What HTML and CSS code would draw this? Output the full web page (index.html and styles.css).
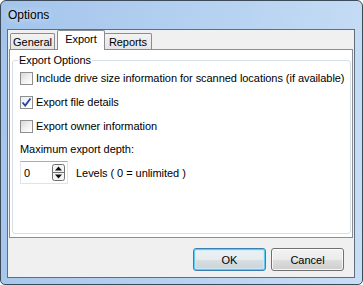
FILE: index.html
```html
<!DOCTYPE html>
<html lang="en">
<head>
    <meta charset="UTF-8">
    <title>Options</title>
    <link rel="stylesheet" href="styles.css">
</head>
<body>
    <!-- Dialog Window -->
    <div class="window">
        <div class="titlebar">Options</div>

        <div class="client">
            <!-- Tab Strip -->
            <div class="tabs">
                <div class="tab general">General</div>
                <div class="tab active">Export</div>
                <div class="tab reports">Reports</div>
            </div>

            <!-- Tab Page -->
            <div class="panel">
                <fieldset class="group">
                    <legend>Export Options</legend>

                    <div class="check">
                        <span class="box"></span>
                        <span>Include drive size information for scanned locations (if available)</span>
                    </div>
                    <div class="check">
                        <span class="box checked">
                            <svg width="11" height="11" viewBox="0 0 11 11">
                                <path d="M1.5 5.5 L4.2 8.5 L9.5 1.5" fill="none" stroke="#2a3f9a" stroke-width="1.8"/>
                            </svg>
                        </span>
                        <span>Export file details</span>
                    </div>
                    <div class="check">
                        <span class="box"></span>
                        <span>Export owner information</span>
                    </div>

                    <div class="depth-label">Maximum export depth:</div>
                    <div class="depth-row">
                        <div class="spin">
                            <span class="spin-value">0</span>
                            <svg class="spin-btn" width="13" height="17" viewBox="0 0 13 17">
                                <rect x="0.5" y="0.5" width="12" height="16" rx="2" fill="#f4f4f4" stroke="#6f6f6f"/>
                                <line x1="1" y1="8.5" x2="12" y2="8.5" stroke="#6f6f6f"/>
                                <path d="M3 6.5 L6.5 2.5 L10 6.5 Z" fill="#111"/>
                                <path d="M3 10.5 L10 10.5 L6.5 14.5 Z" fill="#111"/>
                            </svg>
                        </div>
                        <span>Levels ( 0 = unlimited )</span>
                    </div>
                </fieldset>
            </div>

            <!-- Dialog Buttons -->
            <div class="buttons">
                <button class="btn default">OK</button>
                <button class="btn">Cancel</button>
            </div>
        </div>
    </div>
</body>
</html>
```

FILE: styles.css
```css
* {
    margin: 0;
    padding: 0;
    box-sizing: border-box;
}

body {
    font-family: "Liberation Sans", Arial, sans-serif;
    font-size: 11px;
    letter-spacing: -0.05px;
    color: #000;
    background: #fff;
    white-space: nowrap;
}

/* Window Frame */
.window {
    width: 363px;
    height: 285px;
    border: 1px solid #3c4a5a;
    border-radius: 6px 6px 5px 5px;
    background: linear-gradient(100deg, #a3c4eb 0%, #b3d0f0 45%, #c8def5 100%);
    padding: 0 7px 6px 6px;
    display: flex;
    flex-direction: column;
}

.titlebar {
    height: 28px;
    line-height: 28px;
    padding-left: 1px;
    font-size: 12px;
    letter-spacing: 0;
    text-shadow: 0 0 6px rgba(255, 255, 255, 0.9);
}

.client {
    flex: 1;
    border: 1px solid #5f6d7c;
    background: #f0f0f0;
    padding: 0 1px;
    display: flex;
    flex-direction: column;
}

/* Tabs */
.tabs {
    display: flex;
    align-items: flex-end;
    height: 20px;
    padding-left: 1px;
    margin-bottom: -1px;
}

.tab {
    height: 17px;
    line-height: 16px;
    text-align: center;
    border: 1px solid #898c95;
    border-bottom: none;
    border-radius: 2px 2px 0 0;
    background: linear-gradient(#f3f3f3, #e4e4e4);
}

.tab.general {
    width: 45px;
}

.tab.active {
    position: relative;
    z-index: 1;
    width: 48px;
    height: 20px;
    line-height: 17px;
    margin-left: 2px;
    background: #fff;
}

.tab.reports {
    width: 48px;
    margin-left: -1px;
}

/* Tab Page */
.panel {
    height: 189px;
    border: 1px solid #898c95;
    background: #fff;
    padding: 0 3px 3px 2px;
    display: flex;
}

.group {
    flex: 1;
    border: 1px solid #d5dfe5;
    border-radius: 3px;
    padding: 0 6px 0 7px;
    margin-top: 3px;
}

.group legend {
    margin-left: -2px;
    padding: 0 1px;
    line-height: 14px;
}

.check {
    display: flex;
    align-items: center;
    height: 24px;
    gap: 3px;
}

.check:first-of-type {
    margin-top: -1px;
}

.box {
    width: 13px;
    height: 13px;
    border: 1px solid #8f8f8f;
    background: linear-gradient(135deg, #d8d8d8, #f4f4f4 60%, #fff);
    display: flex;
    align-items: center;
    justify-content: center;
    flex: none;
}

.box.checked {
    background: linear-gradient(135deg, #e8eef8, #fff);
}

.depth-label {
    line-height: 20px;
    margin-top: 1px;
}

.depth-row {
    display: flex;
    align-items: center;
    gap: 8px;
    margin-top: 2px;
}

.spin {
    width: 48px;
    height: 23px;
    border: 1px solid #e2e3ea;
    border-top-color: #abadb3;
    display: flex;
    align-items: center;
    justify-content: space-between;
    padding: 0 2px 0 2px;
}

.spin-value {
    padding-left: 1px;
}

/* Dialog Buttons */
.buttons {
    display: flex;
    justify-content: flex-end;
    gap: 5px;
    padding: 10px 9px 0 0;
}

.btn {
    width: 73px;
    height: 23px;
    font-family: inherit;
    font-size: 11px;
    color: #000;
    border: 1px solid #707070;
    border-radius: 3px;
    background: linear-gradient(#f2f2f2 0%, #ebebeb 50%, #dddddd 51%, #cfcfcf 100%);
    box-shadow: inset 0 0 0 1px rgba(255, 255, 255, 0.8);
}

.btn.default {
    border-color: #3c7fb1;
    box-shadow: inset 0 0 0 1px #5ccbf6, inset 0 0 0 2px rgba(200, 236, 252, 0.8);
    background: linear-gradient(#eef2f4 0%, #e6ebee 50%, #d8dee2 51%, #ccd4d9 100%);
}
```
